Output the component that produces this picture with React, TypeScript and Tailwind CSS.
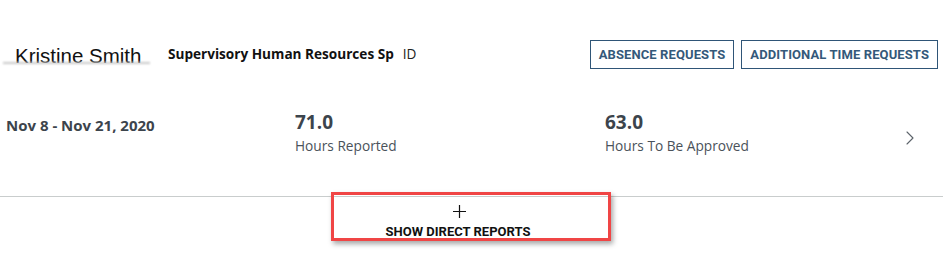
import { ChevronRight } from 'lucide-react';

const openSans = { fontFamily: '"Open Sans", "Noto Sans", sans-serif' };
const roboto = { fontFamily: 'Roboto, "Liberation Sans", sans-serif' };

function RequestButton({ label }: { label: string }) {
  return (
    <button
      className="h-[29px] px-[8px] border-[1.5px] border-[#2f5577] bg-white text-[13px] font-bold text-[#34597a] tracking-[0.1px]"
      style={roboto}
    >
      {label}
    </button>
  );
}

function Stat({ value, label }: { value: string; label: string }) {
  return (
    <div className="flex flex-col" style={openSans}>
      <span className="text-[19px] font-bold leading-[24px] text-[#3c444c]">{value}</span>
      <span className="text-[13.7px] leading-[20px] text-[#4a525a] mt-[2px]">{label}</span>
    </div>
  );
}

export default function App() {
  return (
    <div className="w-[949px] h-[254px] bg-white overflow-hidden relative">
      {/* header */}
      <div className="flex items-center h-[29px] mt-[40px] pr-[11px]">
        <div className="ml-[3px] w-[147px] h-[29px] flex items-center relative">
          <span
            className="ml-[12px] mt-[4px] text-[20.5px] text-[#111] leading-none"
            style={{ fontFamily: '"Liberation Sans", Arial, sans-serif' }}
          >
            Kristine Smith
          </span>
          <div className="absolute left-0 right-0 top-[22px] h-[2px] bg-[#c8c8c8] blur-[1px]" />
        </div>
        <span className="ml-[18px] text-[13.6px] font-bold text-[#111]" style={openSans}>
          Supervisory Human Resources Sp
        </span>
        <span className="ml-[9px] text-[13.6px] text-[#222]" style={openSans}>
          ID
        </span>
        <div className="ml-auto flex gap-[7px]">
          <RequestButton label="ABSENCE REQUESTS" />
          <RequestButton label="ADDITIONAL TIME REQUESTS" />
        </div>
      </div>

      {/* summary row */}
      <div className="flex items-start mt-[43px] h-[84px]">
        <div className="w-[295px] pl-[6px] pt-[1px]">
          <span className="text-[15px] font-bold text-[#3c444c]" style={openSans}>
            Nov 8 - Nov 21, 2020
          </span>
        </div>
        <div className="w-[310px] -mt-[2px]">
          <Stat value="71.0" label="Hours Reported" />
        </div>
        <div className="-mt-[2px]">
          <Stat value="63.0" label="Hours To Be Approved" />
        </div>
        <ChevronRight className="ml-auto mr-[27px] mt-[14px] w-[24px] h-[24px] text-[#5c636a]" strokeWidth={1.1} />
      </div>

      {/* direct reports */}
      <div className="relative w-[943px] border-t border-[#c9cdcd]">
        <div className="flex flex-col items-center w-[916px] pt-[8px]">
          <svg width="13" height="13" viewBox="0 0 13 13" className="ml-[2px]">
            <path d="M6.5 0V13M0 6.5H13" stroke="#111" strokeWidth="1.2" />
          </svg>
          <span className="mt-[7px] text-[13px] font-bold text-[#111] leading-[14px]" style={roboto}>
            SHOW DIRECT REPORTS
          </span>
        </div>
        <div className="absolute left-[331px] top-[-5px] w-[280px] h-[49px] border-[3px] border-[#f04545] shadow-[2px_3px_5px_rgba(0,0,0,0.35)]" />
      </div>
    </div>
  );
}
